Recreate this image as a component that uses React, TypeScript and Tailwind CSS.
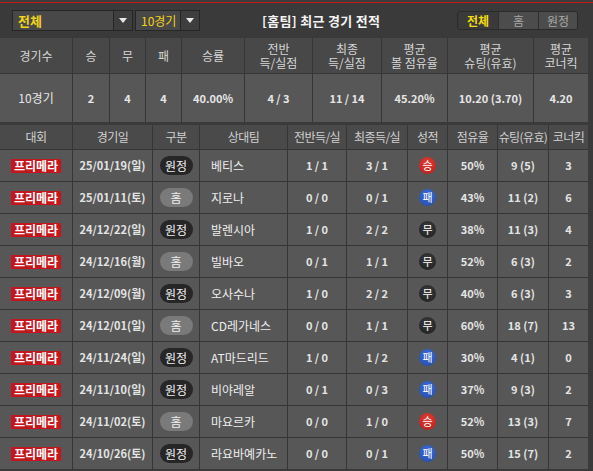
import React from "react";

type Row = {
  date: string;
  side: "홈" | "원정";
  team: string;
  half: string;
  full: string;
  result: "승" | "무" | "패";
  poss: string;
  shots: string;
  corner: string;
};

const rows: Row[] = [
  { date: "25/01/19(일)", side: "원정", team: "베티스", half: "1 / 1", full: "3 / 1", result: "승", poss: "50%", shots: "9 (5)", corner: "3" },
  { date: "25/01/11(토)", side: "홈", team: "지로나", half: "0 / 0", full: "0 / 1", result: "패", poss: "43%", shots: "11 (2)", corner: "6" },
  { date: "24/12/22(일)", side: "원정", team: "발렌시아", half: "1 / 0", full: "2 / 2", result: "무", poss: "38%", shots: "11 (3)", corner: "4" },
  { date: "24/12/16(월)", side: "홈", team: "빌바오", half: "0 / 1", full: "1 / 1", result: "무", poss: "52%", shots: "6 (3)", corner: "2" },
  { date: "24/12/09(월)", side: "원정", team: "오사수나", half: "1 / 0", full: "2 / 2", result: "무", poss: "40%", shots: "6 (3)", corner: "3" },
  { date: "24/12/01(일)", side: "홈", team: "CD레가네스", half: "0 / 0", full: "1 / 1", result: "무", poss: "60%", shots: "18 (7)", corner: "13" },
  { date: "24/11/24(일)", side: "원정", team: "AT마드리드", half: "1 / 0", full: "1 / 2", result: "패", poss: "30%", shots: "4 (1)", corner: "0" },
  { date: "24/11/10(일)", side: "원정", team: "비야레알", half: "0 / 1", full: "0 / 3", result: "패", poss: "37%", shots: "9 (3)", corner: "2" },
  { date: "24/11/02(토)", side: "홈", team: "마요르카", half: "0 / 0", full: "1 / 0", result: "승", poss: "52%", shots: "13 (3)", corner: "7" },
  { date: "24/10/26(토)", side: "원정", team: "라요바예카노", half: "0 / 0", full: "0 / 1", result: "패", poss: "50%", shots: "15 (7)", corner: "2" },
];

const font = { fontFamily: '"Noto Sans CJK KR", "Noto Sans", sans-serif' };

const Caret = () => (
  <svg width="8" height="5" viewBox="0 0 8 5">
    <path d="M0 0h8L4 5z" fill="#e8e8e8" />
  </svg>
);

const ResultDot = ({ r }: { r: Row["result"] }) => {
  const bg =
    r === "승"
      ? "bg-[radial-gradient(circle_at_50%_35%,#e4403a,#b51a17)]"
      : r === "패"
      ? "bg-[radial-gradient(circle_at_50%_35%,#3f6fd8,#2148a6)]"
      : "bg-[radial-gradient(circle_at_50%_35%,#3a3a3a,#1f1f1f)]";
  return (
    <div className={`flex h-[17px] w-[17px] items-center justify-center rounded-full text-[11px] leading-none text-white ${bg}`}>
      {r}
    </div>
  );
};

const SidePill = ({ s }: { s: Row["side"] }) => (
  <div
    className={`flex h-[19px] w-[33px] items-center justify-center rounded-full text-[12px] leading-none ${
      s === "원정" ? "bg-[#262626] text-[#f0f0f0]" : "bg-[#7a7a7a] text-[#f0f0f0]"
    }`}
  >
    {s}
  </div>
);

export default function App() {
  const sumHead = ["경기수", "승", "무", "패", "승률", "전반\n득/실점", "최종\n득/실점", "평균\n볼 점유율", "평균\n슈팅(유효)", "평균\n코너킥"];
  const sumData = ["10경기", "2", "4", "4", "40.00%", "4 / 3", "11 / 14", "45.20%", "10.20 (3.70)", "4.20"];
  const head = ["대회", "경기일", "구분", "상대팀", "전반득/실", "최종득/실", "성적", "점유율", "슈팅(유효)", "코너킥"];

  return (
    <div className="h-[471px] w-[593px] overflow-hidden bg-[#3a3a3a]" style={font}>
      <div className="h-[2px] bg-[#3d3d3d]" />
      <div className="h-px bg-[#c21a1a]" />
      {/* top bar */}
      <div className="relative flex h-[35px] items-center pl-[12px] pr-[15px]">
        <div className="flex h-[21px] w-[121px] border border-[#262626] bg-[#484848]">
          <div className="flex flex-1 items-center pl-[5px] text-[13px] font-bold text-[#f2d21b]">전체</div>
          <div className="flex w-[19px] items-center justify-center border-l border-[#262626] bg-[#3e3e3e]">
            <Caret />
          </div>
        </div>
        <div className="ml-[2px] flex h-[21px] w-[65px] border border-[#262626] bg-[#484848]">
          <div className="flex flex-1 items-center pl-[5px] text-[12px] text-[#f2d21b]">10경기</div>
          <div className="flex w-[19px] items-center justify-center border-l border-[#262626] bg-[#3e3e3e]">
            <Caret />
          </div>
        </div>
        <div className="ml-[62px] text-[13px] font-bold tracking-[0.3px] text-[#f4f4f4]">[홈팀] 최근 경기 전적</div>
        <div className="ml-auto flex h-[19px] overflow-hidden rounded-[3px] border border-[#2a2a2a] text-[12px]">
          <div className="flex w-[40px] items-center justify-center bg-[#3a3a3a] font-bold text-[#f5d90f]">전체</div>
          <div className="flex w-[40px] items-center justify-center border-l border-[#2f2f2f] bg-[#4c4c4c] text-[#a8a8a8]">홈</div>
          <div className="flex w-[39px] items-center justify-center border-l border-[#2f2f2f] bg-[#4c4c4c] text-[#a8a8a8]">원정</div>
        </div>
      </div>

      {/* summary */}
      <div className="grid w-[588px] grid-cols-[72px_36px_35px_35px_62px_67px_68px_65px_85px_54px] gap-px bg-[#363636]">
        {sumHead.map((h, i) => (
          <div
            key={i}
            className="flex h-[35px] items-center justify-center whitespace-pre-line bg-[#484848] text-center text-[12px] leading-[14px] text-[#d6d6d6]"
          >
            {h}
          </div>
        ))}
        {sumData.map((d, i) => (
          <div
            key={i}
            className={`flex h-[48px] items-center justify-center bg-[#575757] text-[#e6e6e6] ${
              i === 0 ? "text-[12px]" : "text-[11px] font-semibold"
            }`}
          >
            {d}
          </div>
        ))}
      </div>

      {/* main table */}
      <div className="mt-[3px] grid w-[588px] grid-cols-[72px_79px_46px_87px_58px_60px_39px_49px_50px_39px] gap-px bg-[#363636]">
        {head.map((h, i) => (
          <div
            key={i}
            className="flex h-[24px] items-center justify-center overflow-visible whitespace-nowrap bg-[#4a4a4a] text-[12px] tracking-[-0.6px] text-[#d0d0d0]"
          >
            {h}
          </div>
        ))}
        {rows.map((r, i) => (
          <React.Fragment key={i}>
            <div className="flex h-[31px] items-center justify-center bg-[#575757]">
              <div className="flex h-[14px] w-[50px] items-center justify-center bg-[#c4161c] text-[12px] font-bold leading-none text-white">
                프리메라
              </div>
            </div>
            <div className="flex h-[31px] items-center justify-center bg-[#575757] text-[11px] font-semibold text-[#e4e4e4]">
              {r.date}
            </div>
            <div className="flex h-[31px] items-center justify-center bg-[#575757]">
              <SidePill s={r.side} />
            </div>
            <div className="flex h-[31px] items-center bg-[#575757] pl-[11px] text-[12px] text-[#eeeeee]">{r.team}</div>
            <div className="flex h-[31px] items-center justify-center bg-[#575757] text-[11px] font-semibold text-[#e4e4e4]">
              {r.half}
            </div>
            <div className="flex h-[31px] items-center justify-center bg-[#575757] text-[11px] font-semibold text-[#e4e4e4]">
              {r.full}
            </div>
            <div className="flex h-[31px] items-center justify-center bg-[#575757]">
              <ResultDot r={r.result} />
            </div>
            <div className="flex h-[31px] items-center justify-center bg-[#575757] text-[11px] font-semibold text-[#e4e4e4]">
              {r.poss}
            </div>
            <div className="flex h-[31px] items-center justify-center bg-[#575757] text-[11px] font-semibold text-[#e4e4e4]">
              {r.shots}
            </div>
            <div className="flex h-[31px] items-center justify-center bg-[#575757] text-[11px] font-semibold text-[#e4e4e4]">
              {r.corner}
            </div>
          </React.Fragment>
        ))}
      </div>
    </div>
  );
}
